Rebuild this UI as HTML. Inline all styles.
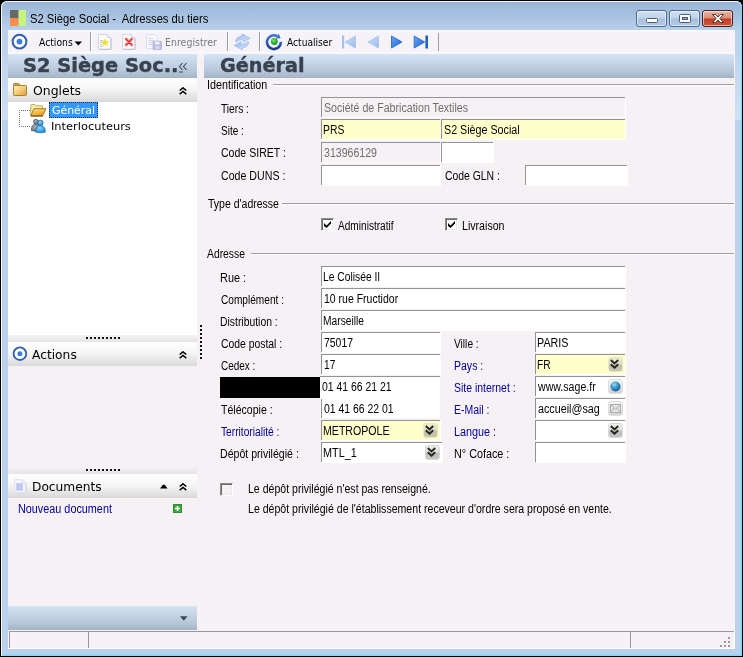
<!DOCTYPE html>
<html lang="fr">
<head>
<meta charset="utf-8">
<title>S2 Siège Social - Adresses du tiers</title>
<style>
html,body{margin:0;padding:0}
body{width:743px;height:657px;background:#000;overflow:hidden;position:relative;font-family:"Liberation Sans",sans-serif}
div,span,svg,i,b{position:absolute;box-sizing:border-box}
.t{white-space:pre;line-height:normal;transform-origin:0 0;color:#000}
.ms{font:400 12.5px "Liberation Sans", sans-serif}
.ttl{font:400 12.5px "Liberation Sans", sans-serif}
.tb{font:400 11px "DejaVu Sans", "Liberation Sans", sans-serif}
.v12{font:400 12px "DejaVu Sans", "Liberation Sans", sans-serif}
.v11{font:400 11px "DejaVu Sans", "Liberation Sans", sans-serif}
.hd{font:700 19px "DejaVu Sans", "Liberation Sans", sans-serif}
.hd{-webkit-text-stroke:.4px #38424e}
#frame{left:1px;top:1px;width:741px;height:655px;border-radius:6px 6px 0 0;background:#b9d1ea;box-shadow:inset 1px 1px 0 #f4faff,inset -1px -1px 0 #7fd7f7,inset -2px -2px 0 #a3d5f2}
#tgrad{left:2px;top:2px;width:739px;height:28px;border-radius:5px 5px 0 0;background:linear-gradient(#9ab6d7,#a6c0df 45%,#b9d0ea)}
#client{left:8px;top:30px;width:727px;height:619px;background:#f5f1f5}
.band{background:linear-gradient(#d6e5f6,#c7d6e8 33%,#b9c8da 66%,#a9b8cb 94%,#a2aec0)}
.sec{left:8px;width:189px;height:24px;background:linear-gradient(#ffffff,#f6f6f6 45%,#d9d9d9)}
.split{left:8px;width:189px;height:7px;background:linear-gradient(#f4f2f4,#e5e3e5)}
.f{border-top:1px solid #939393;border-left:1px solid #939393;background:#fff;box-shadow:1px 1px 0 #fff}
.y{background:#ffffcc}
.d{background:#f5f1f5}
.gl{height:2px;border-top:1px solid #a29fa2;border-bottom:1px solid #fff}
.sep{width:2px;height:19px;top:32px;border-left:1px solid #9c9c9c;border-right:1px solid #fff}
.cb{width:13px;height:13px;background:#fff;border:1px solid;border-color:#8c8c8c #fff #fff #8c8c8c;box-shadow:inset 1px 1px 0 #6a6a6a,inset -1px -1px 0 #ebe8e6}
.dd{width:15px;height:15px;border-radius:3px;border:1px solid #e8e7c4;background:linear-gradient(#ecebd8,#d9d9c6 48%,#bfbfae 56%,#c6c6b4)}
.wb{top:10px;width:31px;height:17px;border-radius:3px;border:1px solid #4e6b8f;box-shadow:inset 0 0 0 1px rgba(255,255,255,.55);background:linear-gradient(#cfdff0,#c0d4ea 48%,#a6bfdc 52%,#b4cbe5)}
</style>
</head>
<body>
<div id="frame"></div>
<div id="tgrad"></div>
<!-- title bar -->
<svg style="left:10px;top:10px" width="16" height="16" viewBox="0 0 16 16"><rect x="0" y="0" width="8.600" height="8" fill="#686864"/><rect x="0" y="8" width="8.300" height="8" fill="#ff8c4a"/><rect x="8.300" y="8" width=".5" height="8" fill="#a0a090"/><rect x="8.600" y="0" width="7.400" height="16" fill="#c6f47c"/></svg>
<div class="wb" style="left:636px"><i style="left:9px;top:7px;width:12px;height:5px;background:#fff;border:1px solid #4a5b73;border-radius:1.500px"></i></div>
<div class="wb" style="left:669px"><i style="left:9px;top:3px;width:12px;height:9px;background:#fff;border:1px solid #4a5b73;border-radius:1.500px"></i><i style="left:12px;top:6px;width:6px;height:3px;background:#8fa6c2;border:1px solid #4a5b73"></i></div>
<div class="wb" style="left:702px;border-color:#47201f;background:linear-gradient(#eab4a4,#dc8c78 48%,#c23d22 52%,#d0573a)"><svg style="left:8px;top:2px" width="14" height="11" viewBox="0 0 14 11"><path d="M1.5 1.5h3.2L7 4l2.3-2.5h3.2L8.8 5.5l3.7 4H9.3L7 7 4.7 9.5H1.5l3.7-4z" fill="#fff" stroke="#4a3a3a" stroke-width="1" stroke-linejoin="round"/></svg></div>

<div style="left:2px;top:30px;width:6px;height:90px;background:linear-gradient(#b9d1ea,#cfddf3)"></div>
<div style="left:735px;top:30px;width:6px;height:90px;background:linear-gradient(#b9d1ea,#d2e0f5)"></div>
<div id="client"></div>
<div id="toolbar" style="left:8px;top:30px;width:727px;height:24px;background:linear-gradient(#fbfaff,#f6f3f8 3px,#f6f3f8 20px,#fbf9fd)"></div>
<!-- toolbar -->
<svg style="left:10.500px;top:33px" width="17" height="17" viewBox="0 0 17 17"><circle cx="8.500" cy="8.600" r="6.900" fill="#fff" stroke="#2f60b4" stroke-width="2"/><circle cx="8.500" cy="8.600" r="2.900" fill="#3b7edb"/></svg>
<svg style="left:74px;top:41px" width="9" height="5" viewBox="0 0 9 5"><path d="M0.5 0.5h7.5L4.25 4.5z" fill="#000"/></svg>
<div class="sep" style="left:90px"></div>
<!-- new -->
<svg style="left:97px;top:33px" width="16" height="18" viewBox="0 0 16 18"><path d="M2.500 16.500h11.500V5" fill="none" stroke="#b4b6c8" stroke-width="1"/><path d="M1.500 1.500h9l3 3v11.500h-12z" fill="#fcfcff" stroke="#d2d5e6"/><path d="M10.500 1.500v3h3" fill="#eef0f8" stroke="#d2d5e6"/><path d="M3 7.500h3M3 9.500h2M3 11.500h2M3 13.500h3" stroke="#bcc6f0"/><path d="M8.00 5.50L9.12 8.06L11.90 8.33L9.81 10.19L10.41 12.92L8.00 11.50L5.59 12.92L6.19 10.19L4.10 8.33L6.88 8.06z" fill="#f0df20" stroke="#f6ee80" stroke-width=".7"/></svg>
<!-- delete -->
<svg style="left:121px;top:33px" width="16" height="18" viewBox="0 0 16 18"><path d="M2.500 16.500h11.500V5" fill="none" stroke="#b4b6c8" stroke-width="1"/><path d="M1.500 1.500h9l3 3v11.500h-12z" fill="#fcfcff" stroke="#d2d5e6"/><path d="M10.500 1.500v3h3" fill="#eef0f8" stroke="#d2d5e6"/><path d="M5.200 6.100l5.500 5.700M10.700 6.100l-5.500 5.700" stroke="#f8b4b4" stroke-width="3.400" stroke-linecap="round"/><path d="M5 5.900l5.900 6.100M10.900 5.900l-5.900 6.100" stroke="#dc3030" stroke-width="1.500" stroke-linecap="round"/></svg>
<!-- save (disabled) -->
<svg style="left:145px;top:33px" width="18" height="18" viewBox="0 0 18 18"><path d="M1.500 1.500h8l3 3v11h-11z" fill="#f8f9fd" stroke="#dcdfec"/><path d="M3.500 5.500h5M3.500 7.500h6M3.500 9.500h4M3.500 11.500h4" stroke="#cfd6ee"/><rect x="8" y="8.300" width="8.500" height="8.300" rx="1" fill="#bdb9e2" stroke="#b3afdc" stroke-width=".8"/><rect x="9.800" y="8.700" width="4.800" height="2.800" fill="#f0effa"/><rect x="9.800" y="13" width="4.800" height="3.200" fill="#d8d6ee"/></svg>
<div class="sep" style="left:227px"></div>
<!-- refresh arrows (disabled) -->
<svg style="left:233px;top:33px" width="18" height="18" viewBox="0 0 18 18"><defs><linearGradient id="ra" x1="0" y1="0" x2="1" y2="1"><stop offset="0" stop-color="#98b4e2"/><stop offset=".6" stop-color="#bdd4f6"/><stop offset="1" stop-color="#a8c2ec"/></linearGradient></defs><path d="M2.400 8.600Q3.500 3.500 9 2.800L9 .8 17.400 5.200 10.400 9.200 10 6.800Q6 6.500 3.800 9z" fill="url(#ra)" stroke="#9db3de" stroke-width=".5"/><path d="M16 9.200Q14.900 14.300 9.400 15L9.400 17 1 12.600 8 8.600 8.400 11Q12.400 11.300 14.600 8.800z" fill="url(#ra)" stroke="#9db3de" stroke-width=".5"/></svg>
<div class="sep" style="left:259px"></div>
<!-- actualiser -->
<svg style="left:265px;top:33px" width="18" height="18" viewBox="0 0 18 18"><defs><linearGradient id="rg" x1="0" y1="0" x2="0" y2="1"><stop offset="0" stop-color="#3d76d0"/><stop offset=".55" stop-color="#2c5cb4"/><stop offset="1" stop-color="#1b3c8c"/></linearGradient><radialGradient id="gg" cx=".4" cy=".35" r=".7"><stop offset="0" stop-color="#7eea78"/><stop offset=".5" stop-color="#2fba2f"/><stop offset="1" stop-color="#168a1c"/></radialGradient></defs><path d="M12.350 3.220A6.900 6.900 0 1 0 15.790 8.840" fill="none" stroke="url(#rg)" stroke-width="2.600"/><path d="M13.750 .8L10.950 5.600 15.600 5.200z" fill="#3a70c8"/><circle cx="9.300" cy="8.500" r="3.400" fill="url(#gg)"/></svg>
<!-- nav arrows -->
<svg style="left:341px;top:35px" width="16" height="14" viewBox="0 0 16 14"><defs><linearGradient id="n1" x1="0" y1="0" x2="1" y2="1"><stop offset="0" stop-color="#cfe0f8"/><stop offset="1" stop-color="#9dbbe8"/></linearGradient><linearGradient id="n2" x1="0" y1="0" x2="1" y2="1"><stop offset="0" stop-color="#66aaf8"/><stop offset="1" stop-color="#1f62cc"/></linearGradient></defs><rect x="1" y=".5" width="2.200" height="13" fill="#a4c0ea"/><path d="M14.500 1v12L4 7z" fill="url(#n1)" stroke="#a8c4ec" stroke-width=".8"/></svg>
<svg style="left:367px;top:35px" width="12" height="14" viewBox="0 0 12 14"><path d="M11.500 1v12L1 7z" fill="url(#n1)" stroke="#a8c4ec" stroke-width=".8"/></svg>
<svg style="left:390px;top:35px" width="13" height="14" viewBox="0 0 13 14"><path d="M1.500 1v12L12 7z" fill="url(#n2)" stroke="#2a6ad0" stroke-width=".9"/></svg>
<svg style="left:413px;top:35px" width="16" height="14" viewBox="0 0 16 14"><path d="M1.200 1v12L11.700 7z" fill="url(#n2)" stroke="#2a6ad0" stroke-width=".9"/><rect x="12.400" y=".5" width="2.600" height="13" fill="#2160c4"/></svg>
<div style="left:438px;top:33px;width:1px;height:18px;background:#9e9e9e"></div>

<!-- header bands -->
<div class="band" style="left:8px;top:54px;width:189px;height:24px"></div>
<div class="band" style="left:204px;top:54px;width:530px;height:24px"></div>
<svg style="left:178px;top:62px" width="10" height="11" viewBox="0 0 10 11"><path d="M4.500 1L1.500 4.500l3 3.500M8.500 1L5.500 4.500l3 3.500" fill="none" stroke="#3e4956" stroke-width="1.100"/><path d="M1 10h4" stroke="#3e4956"/></svg>

<!-- left panel -->
<div class="sec" style="top:78px"></div>
<div style="left:8px;top:102px;width:189px;height:233px;background:#fff"></div>
<div class="split" style="top:335px"></div>
<div class="sec" style="top:342px"></div>
<div class="split" style="top:467px"></div>
<div class="sec" style="top:474px"></div>
<div style="left:8px;top:606px;width:189px;height:24px;background:linear-gradient(#d7e3f3,#c7d5e7 33%,#b9c8da 66%,#a8b7ca 94%,#a3afc1)"></div>
<svg style="left:180px;top:616px" width="8" height="5" viewBox="0 0 8 5"><path d="M0 .3h7.500L3.750 4.700z" fill="#3c4650"/></svg>
<!-- splitter dots -->
<div style="left:86px;top:337px;width:34px;height:2px;background:repeating-linear-gradient(90deg,#111 0 2px,transparent 2px 4px)"></div>
<div style="left:86px;top:469px;width:34px;height:2px;background:repeating-linear-gradient(90deg,#111 0 2px,transparent 2px 4px)"></div>
<div style="left:200px;top:325px;width:2px;height:34px;background:repeating-linear-gradient(180deg,#111 0 2px,transparent 2px 4px)"></div>
<!-- section icons -->
<svg style="left:13px;top:83px" width="14" height="13" viewBox="0 0 14 13"><defs><linearGradient id="fg" x1="0" y1="0" x2="1" y2="1"><stop offset="0" stop-color="#fdf0c0"/><stop offset=".5" stop-color="#f4cd78"/><stop offset="1" stop-color="#de9a3a"/></linearGradient></defs><path d="M.5 2.800V1.300q0-.8.800-.8h4.200q.7 0 .9.700l.3 1.400z" fill="#d8aa58" stroke="#a57e30"/><rect x=".5" y="2.500" width="13" height="10" rx=".8" fill="url(#fg)" stroke="#a8822f"/></svg>
<svg class="chev" style="left:179px;top:87px" width="8" height="8" viewBox="0 0 8 8"><path d="M.7 3.500L4 .8l3.300 2.700M.7 7.200L4 4.500l3.300 2.700" fill="none" stroke="#000" stroke-width="1.500"/></svg>
<svg style="left:12px;top:346px" width="16" height="16" viewBox="0 0 16 16"><circle cx="7.900" cy="7.700" r="6.300" fill="#fff" stroke="#325fae" stroke-width="1.800"/><circle cx="7.900" cy="7.700" r="2.500" fill="#3b7edb"/></svg>
<svg class="chev" style="left:179px;top:351px" width="8" height="8" viewBox="0 0 8 8"><path d="M.7 3.500L4 .8l3.300 2.700M.7 7.200L4 4.500l3.300 2.700" fill="none" stroke="#000" stroke-width="1.500"/></svg>
<svg style="left:14px;top:479px" width="13" height="15" viewBox="0 0 13 15"><path d="M1.500 13.700h10.300V4" fill="none" stroke="#b4b8cc"/><path d="M.7.700h7.600l3 3v9.800H.7z" fill="#f6f8ff" stroke="#dde2f0"/><path d="M8.300.7v3h3" fill="#e8ecf8" stroke="#dde2f0"/><rect x="2.200" y="4.300" width="6.600" height="7" fill="#d3dbf8"/><path d="M2.200 5h6.600M2.200 7h6.600M2.200 9h6.600M2.200 11h6.600" stroke="#a4b4ee" stroke-width=".9"/></svg>
<svg style="left:159.500px;top:483.500px" width="8" height="5" viewBox="0 0 8 5"><path d="M0 4.600h7.600L5 1.200Q3.800 0 2.600 1.200z" fill="#000"/></svg>
<svg class="chev" style="left:179px;top:483px" width="8" height="8" viewBox="0 0 8 8"><path d="M.7 3.500L4 .8l3.300 2.700M.7 7.200L4 4.500l3.300 2.700" fill="none" stroke="#000" stroke-width="1.500"/></svg>
<!-- tree -->
<div style="left:19px;top:110px;width:1px;height:17px;background:repeating-linear-gradient(180deg,#777 0 1px,transparent 1px 2px)"></div>
<div style="left:19px;top:110px;width:11px;height:1px;background:repeating-linear-gradient(90deg,#777 0 1px,transparent 1px 2px)"></div>
<div style="left:19px;top:126px;width:11px;height:1px;background:repeating-linear-gradient(90deg,#777 0 1px,transparent 1px 2px)"></div>
<svg style="left:30px;top:104px" width="17" height="13" viewBox="0 0 17 13"><defs><linearGradient id="of" x1="0" y1="0" x2=".6" y2="1"><stop offset="0" stop-color="#ffe88c"/><stop offset=".55" stop-color="#f6be44"/><stop offset="1" stop-color="#e39a20"/></linearGradient></defs><path d="M.7 11.500V1.200Q.7 .5 1.400 .5H5L6.200 1.800H12Q12.600 1.800 12.600 2.500V11.500z" fill="#f8e9a8" stroke="#b89a48" stroke-width=".8"/><path d="M.8 11.900L4 4.700H16L12.700 11.900z" fill="url(#of)" stroke="#8c6618" stroke-width=".8"/><path d="M1 12.100H12.600" stroke="#6a4c10" stroke-width=".9"/></svg>
<div style="left:49px;top:102px;width:49px;height:16px;background:#3399ff;border:1px dotted #1a2a4a"></div>
<svg style="left:31px;top:119px" width="15" height="15" viewBox="0 0 15 15"><defs><radialGradient id="pb" cx=".4" cy=".3" r=".8"><stop offset="0" stop-color="#8ad6fa"/><stop offset=".6" stop-color="#3fa4e4"/><stop offset="1" stop-color="#2484c8"/></radialGradient><radialGradient id="pg" cx=".4" cy=".3" r=".8"><stop offset="0" stop-color="#a4aeb8"/><stop offset="1" stop-color="#66727e"/></radialGradient></defs><path d="M.4 11.600C.4 6.800 2 5.200 4.900 5.200S9.200 6.800 9.200 11.600Q4.800 12.800 .4 11.600z" fill="url(#pg)" stroke="#3e4852" stroke-width=".7"/><circle cx="4.900" cy="2.700" r="2.400" fill="url(#pg)" stroke="#3e4852" stroke-width=".7"/><path d="M4.600 13.100C4.600 8.400 6.500 6.600 9.400 6.600S14.300 8.400 14.300 13.100Q9.400 14.600 4.600 13.100z" fill="url(#pb)" stroke="#1c5e98" stroke-width=".7"/><circle cx="9.400" cy="3.800" r="2.700" fill="url(#pb)" stroke="#1c5e98" stroke-width=".7"/></svg>
<!-- green plus -->
<svg style="left:173px;top:504px" width="9" height="9" viewBox="0 0 9 9"><rect x=".5" y=".5" width="8" height="8" fill="#3aaa3a" stroke="#2f8f2f"/><path d="M4.500 2v5M2 4.500h5" stroke="#fff" stroke-width="1.700"/></svg>

<!-- status bar -->
<div style="left:9px;top:631px;width:725px;height:1px;background:#9b979b"></div>
<div style="left:734px;top:631px;width:1px;height:18px;background:#fff"></div>
<div style="left:9px;top:631px;width:1px;height:17px;background:#9b979b"></div>
<div style="left:88px;top:631px;width:1px;height:17px;background:#9b979b"></div>
<div style="left:630px;top:631px;width:1px;height:17px;background:#9b979b"></div>
<div style="left:9px;top:648px;width:726px;height:1px;background:#fff"></div>
<svg style="left:720px;top:637px" width="10" height="10" viewBox="0 0 10 10" fill="#9c9698"><rect x="8" y="0" width="2" height="2"/><rect x="4" y="4" width="2" height="2"/><rect x="8" y="4" width="2" height="2"/><rect x="0" y="8" width="2" height="2"/><rect x="4" y="8" width="2" height="2"/><rect x="8" y="8" width="2" height="2"/></svg>

<!-- group lines -->
<div class="gl" style="left:273px;top:84px;width:461px"></div>
<div class="gl" style="left:282px;top:203px;width:452px"></div>
<div class="gl" style="left:251px;top:253px;width:483px"></div>

<!-- fields -->
<div class="f d" style="left:321px;top:97px;width:304px;height:20px"></div>
<div class="f y" style="left:321px;top:119px;width:119px;height:20px"></div>
<div class="f y" style="left:441px;top:119px;width:184px;height:20px"></div>
<div class="f d" style="left:321px;top:142px;width:119px;height:20px"></div>
<div class="f" style="left:441px;top:142px;width:52px;height:20px"></div>
<div class="f" style="left:321px;top:165px;width:119px;height:20px"></div>
<div class="f" style="left:525px;top:165px;width:102px;height:20px"></div>

<div class="f" style="left:321px;top:266px;width:304px;height:20px"></div>
<div class="f" style="left:321px;top:288px;width:304px;height:20px"></div>
<div class="f" style="left:321px;top:310px;width:304px;height:20px"></div>
<div class="f" style="left:321px;top:332px;width:119px;height:20px"></div>
<div class="f" style="left:321px;top:354px;width:119px;height:20px"></div>
<div style="left:320px;top:376px;width:120px;height:42px;background:#fff;border-top:1px solid #939393"></div>
<div style="left:321px;top:399px;width:1px;height:19px;background:#939393"></div>
<div style="left:220px;top:377px;width:100px;height:21px;background:#000"></div>
<div class="f y" style="left:321px;top:420px;width:119px;height:20px"></div>
<div class="f" style="left:321px;top:442px;width:121px;height:20px"></div>

<div class="f" style="left:535px;top:332px;width:90px;height:20px"></div>
<div class="f y" style="left:535px;top:354px;width:90px;height:20px"></div>
<div class="f" style="left:535px;top:376px;width:90px;height:20px"></div>
<div class="f" style="left:535px;top:398px;width:90px;height:20px"></div>
<div class="f" style="left:535px;top:420px;width:90px;height:20px"></div>
<div class="f" style="left:535px;top:442px;width:90px;height:20px"></div>

<!-- dropdown buttons -->
<div class="dd" style="left:422.500px;top:422.500px"><svg style="left:1.800px;top:1.500px" width="9" height="10" viewBox="0 0 9 10"><path d="M.8 1L4.500 4.500 8.200 1M.8 5.300L4.500 8.800 8.200 5.300" fill="none" stroke="#26261c" stroke-width="1.900"/></svg></div>
<div class="dd" style="left:424.500px;top:444.500px;border-color:#d9d9d9;background:linear-gradient(#f0f0f0,#dcdcdc 48%,#c0c0c0 56%,#c6c6c6)"><svg style="left:1.800px;top:1.500px" width="9" height="10" viewBox="0 0 9 10"><path d="M.8 1L4.500 4.500 8.200 1M.8 5.300L4.500 8.800 8.200 5.300" fill="none" stroke="#26261c" stroke-width="1.900"/></svg></div>
<div class="dd" style="left:607.500px;top:356.500px"><svg style="left:1.800px;top:1.500px" width="9" height="10" viewBox="0 0 9 10"><path d="M.8 1L4.500 4.500 8.200 1M.8 5.300L4.500 8.800 8.200 5.300" fill="none" stroke="#26261c" stroke-width="1.900"/></svg></div>
<div class="dd" style="left:607.500px;top:378.500px;border-color:#dedede;background:linear-gradient(#f4f4f4,#e6e6e6 50%,#d2d2d2)"><svg style="left:1.200px;top:1px" width="11" height="11" viewBox="0 0 11 11"><defs><radialGradient id="gl" cx=".38" cy=".32" r=".75"><stop offset="0" stop-color="#9fdcf8"/><stop offset=".45" stop-color="#3a96d6"/><stop offset="1" stop-color="#174f8e"/></radialGradient></defs><circle cx="5.500" cy="5.500" r="5" fill="url(#gl)"/><path d="M5 1.500q2 .5 1.500 2t-2 1.500q-.5 1.500-2 1" fill="none" stroke="#58c08a" stroke-width=".9" opacity=".7"/></svg></div>
<div class="dd" style="left:607.500px;top:400.500px;border-color:#dedede;background:linear-gradient(#f4f4f4,#e6e6e6 50%,#d2d2d2)"><svg style="left:1.500px;top:2px" width="11" height="9" viewBox="0 0 11 9"><rect x=".5" y=".5" width="10" height="8" fill="#e4e4e4" stroke="#b0b0b0"/><path d="M.5 .5L5.500 5l5-4.500M.5 8.500L4 4M10.500 8.500L7 4" fill="none" stroke="#b0b0b0"/></svg></div>
<div class="dd" style="left:607.500px;top:422.500px;border-color:#d9d9d9;background:linear-gradient(#f0f0f0,#dcdcdc 48%,#c0c0c0 56%,#c6c6c6)"><svg style="left:1.800px;top:1.500px" width="9" height="10" viewBox="0 0 9 10"><path d="M.8 1L4.500 4.500 8.200 1M.8 5.300L4.500 8.800 8.200 5.300" fill="none" stroke="#26261c" stroke-width="1.900"/></svg></div>

<!-- checkboxes -->
<div class="cb" style="left:321px;top:218px"><svg style="left:2px;top:2px" width="7" height="7" viewBox="0 0 7 7"><path d="M0 2v3l2.500 2L7 2.500V0L2.500 4.500z" fill="#000"/></svg></div>
<div class="cb" style="left:445px;top:218px"><svg style="left:2px;top:2px" width="7" height="7" viewBox="0 0 7 7"><path d="M0 2v3l2.500 2L7 2.500V0L2.500 4.500z" fill="#000"/></svg></div>
<div class="cb" style="left:220px;top:483px;background:#f5f1f5"></div>

<div id="texts" style="left:0;top:0;width:743px;height:657px;will-change:transform">
<span class="t ttl" style="left:30.20px;top:12.00px;transform:scaleX(0.8978)">S2 Siège Social -  Adresses du tiers</span>
<span class="t tb" style="left:39.00px;top:36.00px;transform:scaleX(0.8405)">Actions</span>
<span class="t tb" style="left:165.14px;top:36.00px;transform:scaleX(0.8569);color:#7a7a7a">Enregistrer</span>
<span class="t tb" style="left:287.00px;top:36.00px;transform:scaleX(0.8289)">Actualiser</span>
<span class="t hd" style="left:23.38px;top:54.40px;transform:scaleX(1.0219);color:#38424e">S2 Siège Soc..</span>
<span class="t hd" style="left:219.60px;top:54.40px;transform:scaleX(1.0111);color:#38424e">Général</span>
<span class="t v12" style="left:32.60px;top:84.00px;transform:scaleX(1.0371)">Onglets</span>
<span class="t v11" style="left:52.00px;top:104.00px;transform:scaleX(0.9932);color:#fff">Général</span>
<span class="t v11" style="left:50.96px;top:120.00px;transform:scaleX(1.0368)">Interlocuteurs</span>
<span class="t v12" style="left:32.00px;top:348.00px;transform:scaleX(1.0211)">Actions</span>
<span class="t v12" style="left:32.18px;top:480.00px;transform:scaleX(1.0169)">Documents</span>
<span class="t ms" style="left:17.63px;top:502.00px;transform:scaleX(0.8663);color:#00009c">Nouveau document</span>
<span class="t ms" style="left:206.64px;top:78.00px;transform:scaleX(0.8594)">Identification</span>
<span class="t ms" style="left:221.00px;top:102.00px;transform:scaleX(0.8139)">Tiers :</span>
<span class="t ms" style="left:221.00px;top:124.00px;transform:scaleX(0.7997)">Site :</span>
<span class="t ms" style="left:221.00px;top:146.00px;transform:scaleX(0.8442)">Code SIRET :</span>
<span class="t ms" style="left:221.00px;top:169.00px;transform:scaleX(0.8505)">Code DUNS :</span>
<span class="t ms" style="left:324.00px;top:101.00px;transform:scaleX(0.8507);color:#6e6e6e">Société de Fabrication Textiles</span>
<span class="t ms" style="left:323.17px;top:123.00px;transform:scaleX(0.8291)">PRS</span>
<span class="t ms" style="left:443.60px;top:123.00px;transform:scaleX(0.8574)">S2 Siège Social</span>
<span class="t ms" style="left:324.00px;top:146.00px;transform:scaleX(0.8464);color:#6e6e6e">313966129</span>
<span class="t ms" style="left:445.00px;top:169.00px;transform:scaleX(0.8317)">Code GLN :</span>
<span class="t ms" style="left:208.00px;top:197.00px;transform:scaleX(0.8409)">Type d'adresse</span>
<span class="t ms" style="left:338.00px;top:219.00px;transform:scaleX(0.8081)">Administratif</span>
<span class="t ms" style="left:461.75px;top:219.00px;transform:scaleX(0.8498)">Livraison</span>
<span class="t ms" style="left:207.00px;top:247.00px;transform:scaleX(0.8278)">Adresse</span>
<span class="t ms" style="left:220.13px;top:271.00px;transform:scaleX(0.8731)">Rue :</span>
<span class="t ms" style="left:221.00px;top:293.00px;transform:scaleX(0.8095)">Complément :</span>
<span class="t ms" style="left:220.17px;top:315.00px;transform:scaleX(0.8309)">Distribution :</span>
<span class="t ms" style="left:221.00px;top:337.00px;transform:scaleX(0.8294)">Code postal :</span>
<span class="t ms" style="left:221.00px;top:359.00px;transform:scaleX(0.7980)">Cedex :</span>
<span class="t ms" style="left:221.00px;top:403.00px;transform:scaleX(0.8455)">Télécopie :</span>
<span class="t ms" style="left:221.00px;top:425.00px;transform:scaleX(0.8161);color:#00009c">Territorialité :</span>
<span class="t ms" style="left:220.15px;top:447.00px;transform:scaleX(0.8469)">Dépôt privilégié :</span>
<span class="t ms" style="left:323.18px;top:270.00px;transform:scaleX(0.8234)">Le Colisée II</span>
<span class="t ms" style="left:324.00px;top:292.00px;transform:scaleX(0.8402)">10 rue Fructidor</span>
<span class="t ms" style="left:323.18px;top:314.00px;transform:scaleX(0.8194)">Marseille</span>
<span class="t ms" style="left:324.00px;top:336.00px;transform:scaleX(0.8332)">75017</span>
<span class="t ms" style="left:324.00px;top:358.00px;transform:scaleX(0.8099)">17</span>
<span class="t ms" style="left:322.00px;top:380.00px;transform:scaleX(0.8339)">01 41 66 21 21</span>
<span class="t ms" style="left:324.00px;top:402.00px;transform:scaleX(0.8351)">01 41 66 22 01</span>
<span class="t ms" style="left:323.15px;top:424.00px;transform:scaleX(0.8477)">METROPOLE</span>
<span class="t ms" style="left:323.13px;top:446.00px;transform:scaleX(0.8669)">MTL_1</span>
<span class="t ms" style="left:454.40px;top:337.00px;transform:scaleX(0.8136)">Ville :</span>
<span class="t ms" style="left:453.56px;top:359.00px;transform:scaleX(0.8418);color:#00009c">Pays :</span>
<span class="t ms" style="left:454.40px;top:381.00px;transform:scaleX(0.8363);color:#00009c">Site internet :</span>
<span class="t ms" style="left:453.56px;top:403.00px;transform:scaleX(0.8364);color:#00009c">E-Mail :</span>
<span class="t ms" style="left:453.54px;top:425.00px;transform:scaleX(0.8647);color:#00009c">Langue :</span>
<span class="t ms" style="left:453.54px;top:447.00px;transform:scaleX(0.8645)">N° Coface :</span>
<span class="t ms" style="left:536.74px;top:336.00px;transform:scaleX(0.8625)">PARIS</span>
<span class="t ms" style="left:536.78px;top:358.00px;transform:scaleX(0.8186)">FR</span>
<span class="t ms" style="left:538.45px;top:380.00px;transform:scaleX(0.8474)">www.sage.fr</span>
<span class="t ms" style="left:537.60px;top:402.00px;transform:scaleX(0.8607)">accueil@sag</span>
<span class="t ms" style="left:248.16px;top:482.00px;transform:scaleX(0.8444)">Le dépôt privilégié n'est pas renseigné.</span>
<span class="t ms" style="left:248.15px;top:502.00px;transform:scaleX(0.8459)">Le dépôt privilégié de l'établissement receveur d'ordre sera proposé en vente.</span>
</div>
</body>
</html>
